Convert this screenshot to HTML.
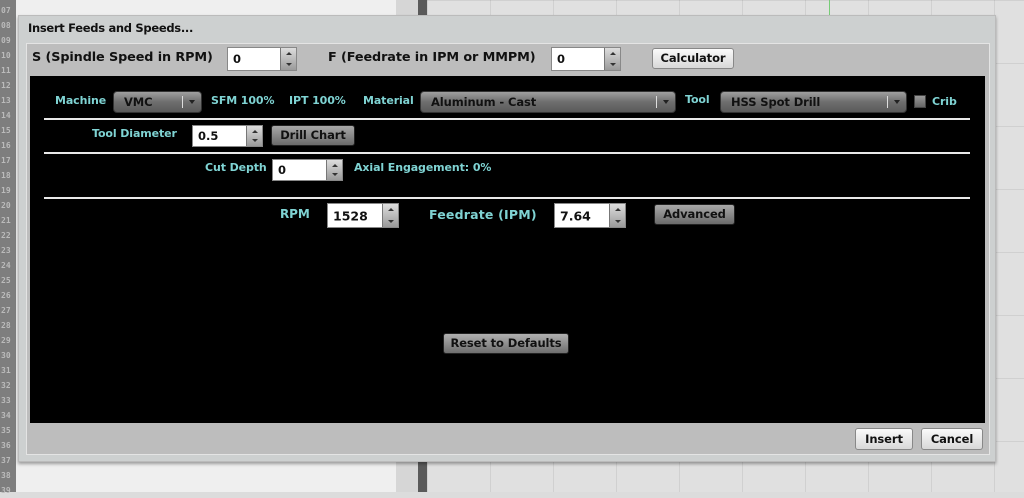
<!DOCTYPE html>
<html><head><meta charset="utf-8"><style>
*{margin:0;padding:0;box-sizing:border-box}
body{width:1024px;height:492px;overflow:hidden;position:relative;background:#dcdcdc;font-family:"DejaVu Sans","Liberation Sans",sans-serif;font-weight:bold}
.a{position:absolute}
.lbl{position:absolute;color:#7fd3d3;font-size:11px;letter-spacing:-0.1px;white-space:nowrap}
.dk{position:absolute;color:#111;white-space:nowrap}
.spin{position:absolute;background:#fff;border:1px solid #888;}
.spin span{position:absolute;left:5px;top:50%;transform:translateY(-50%);font-size:11.5px;color:#111}
.spin i{position:absolute;right:0;top:0;bottom:0;width:16px;background:linear-gradient(#ddd,#9a9a9a);border-left:1px solid #777}
.spin i:before{content:"";position:absolute;left:5px;top:4px;border:3px solid transparent;border-bottom:3px solid #333;border-top:0}
.spin i:after{content:"";position:absolute;left:5px;bottom:4px;border:3px solid transparent;border-top:3px solid #333;border-bottom:0}
.combo{position:absolute;border-radius:4px;background:linear-gradient(#a0a0a0,#6e6e6e 50%,#5a5a5a);border:1px solid #333}
.combo span{position:absolute;left:10px;top:50%;transform:translateY(-50%);font-size:11.5px;color:#111;letter-spacing:-0.1px}
.combo i{position:absolute;right:18px;top:4px;bottom:4px;width:1px;background:#ddd}
.combo b{position:absolute;right:6px;top:50%;margin-top:-2px;border:3px solid transparent;border-top:4px solid #222}
.btn{position:absolute;border-radius:3px;border:1px solid #888;background:linear-gradient(#fafafa,#d8d8d8);font-size:11.5px;color:#111;text-align:center;letter-spacing:-0.1px}
.dbtn{position:absolute;border-radius:3px;border:1px solid #222;background:linear-gradient(#a8a8a8,#6a6a6a);font-size:11.5px;color:#111;text-align:center;letter-spacing:-0.1px}
.hl{position:absolute;left:44px;width:926px;height:2px;background:#e8e8e8}
</style></head><body>
<div class="a" style="left:0;top:0;width:16px;height:492px;background:#7e7e7e"></div>
<div class="a" style="left:1px;top:3px;width:15px;height:492px;color:#bbb;font-size:8px;line-height:15px;font-family:'DejaVu Sans Mono',monospace">07<br>08<br>09<br>10<br>11<br>12<br>13<br>14<br>15<br>16<br>17<br>18<br>19<br>20<br>21<br>22<br>23<br>24<br>25<br>26<br>27<br>28<br>29<br>30<br>31<br>32<br>33<br>34<br>35<br>36<br>37<br>38<br>39</div>
<div class="a" style="left:16px;top:0;width:380px;height:492px;background:#efefef"></div>
<div class="a" style="left:396px;top:0;width:22px;height:492px;background:#d6d6d6"></div>
<div class="a" style="left:418px;top:0;width:9px;height:492px;background:#5a5a5a"></div>
<div class="a" style="left:427px;top:0;width:597px;height:492px;background:#e0e0e0;background-image:linear-gradient(90deg,rgba(0,0,0,.07) 1px,transparent 1px),linear-gradient(rgba(0,0,0,.07) 1px,transparent 1px);background-size:63px 63px"></div>
<div class="a" style="left:829px;top:0;width:1px;height:16px;background:#7c7"></div>
<div class="a" style="left:18px;top:15px;width:978px;height:447px;background:#cdd0d0;border:1px solid #bbb;box-shadow:0 2px 3px rgba(0,0,0,.35)"></div>
<div class="dk" style="left:28px;top:21px;font-size:11.5px;letter-spacing:-0.3px">Insert Feeds and Speeds...</div>
<div class="a" style="left:26px;top:43px;width:964px;height:412px;background:#bdbdbd;border:1px solid #e4e4e4"></div>
<div class="dk" style="left:32px;top:50px;font-size:12.8px;letter-spacing:-0.1px">S (Spindle Speed in RPM)</div>
<div class="spin" style="left:227px;top:47px;width:70px;height:24px"><span>0</span><i></i></div>
<div class="dk" style="left:328px;top:50px;font-size:12.8px;letter-spacing:-0.1px">F (Feedrate in IPM or MMPM)</div>
<div class="spin" style="left:551px;top:47px;width:70px;height:24px"><span>0</span><i></i></div>
<div class="btn" style="left:652px;top:48px;width:82px;height:21px;line-height:19px">Calculator</div>
<div class="a" style="left:30px;top:76px;width:955px;height:347px;background:#000"></div>
<div class="lbl" style="left:55px;top:94px">Machine</div>
<div class="combo" style="left:113px;top:91px;width:89px;height:22px"><span>VMC</span><i></i><b></b></div>
<div class="lbl" style="left:211px;top:94px">SFM 100%</div>
<div class="lbl" style="left:289px;top:94px">IPT 100%</div>
<div class="lbl" style="left:363px;top:94px">Material</div>
<div class="combo" style="left:420px;top:91px;width:256px;height:22px"><span>Aluminum - Cast</span><i></i><b></b></div>
<div class="lbl" style="left:685px;top:93px">Tool</div>
<div class="combo" style="left:720px;top:91px;width:187px;height:22px"><span>HSS Spot Drill</span><i></i><b></b></div>
<div class="a" style="left:914px;top:95px;width:12px;height:13px;background:linear-gradient(#999,#666);border:1px solid #444"></div>
<div class="lbl" style="left:932px;top:95px">Crib</div>
<div class="hl" style="top:118px"></div>
<div class="lbl" style="left:92px;top:127px">Tool Diameter</div>
<div class="spin" style="left:192px;top:125px;width:71px;height:22px"><span>0.5</span><i></i></div>
<div class="dbtn" style="left:271px;top:125px;width:84px;height:21px;line-height:19px">Drill Chart</div>
<div class="hl" style="top:152px"></div>
<div class="lbl" style="left:205px;top:161px">Cut Depth</div>
<div class="spin" style="left:272px;top:159px;width:71px;height:22px"><span>0</span><i></i></div>
<div class="lbl" style="left:354px;top:161px">Axial Engagement: 0%</div>
<div class="hl" style="top:197px"></div>
<div class="lbl" style="left:280px;top:207px;font-size:12px">RPM</div>
<div class="spin" style="left:327px;top:203px;width:72px;height:25px"><span style="font-size:12.5px">1528</span><i></i></div>
<div class="lbl" style="left:429px;top:207px;font-size:12.5px;letter-spacing:0.2px">Feedrate (IPM)</div>
<div class="spin" style="left:554px;top:203px;width:72px;height:25px"><span style="font-size:12.5px">7.64</span><i></i></div>
<div class="dbtn" style="left:654px;top:204px;width:81px;height:21px;line-height:19px">Advanced</div>
<div class="dbtn" style="left:443px;top:333px;width:126px;height:21px;line-height:19px;background:linear-gradient(#b0b0b0,#6e6e6e)">Reset to Defaults</div>
<div class="btn" style="left:855px;top:428px;width:58px;height:22px;line-height:20px">Insert</div>
<div class="btn" style="left:921px;top:428px;width:62px;height:22px;line-height:20px">Cancel</div>
</body></html>
